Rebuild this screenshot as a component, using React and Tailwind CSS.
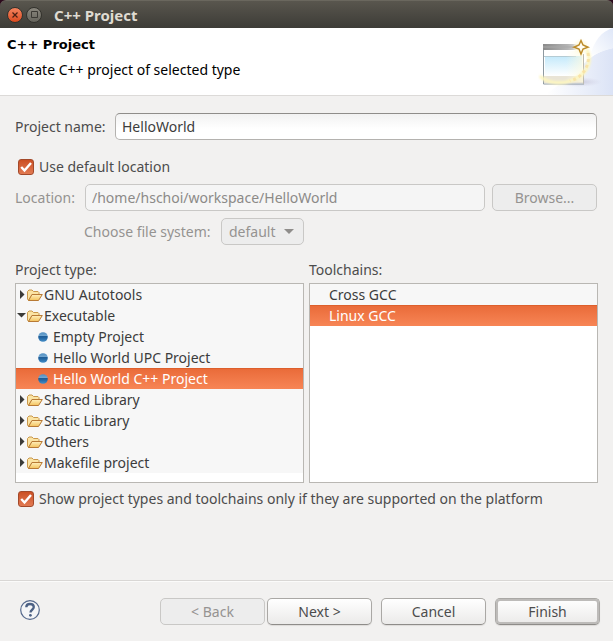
import React, { useState } from "react";

const projectTypes = [
  { name: "GNU Autotools" },
  {
    name: "Executable",
    children: ["Empty Project", "Hello World UPC Project", "Hello World C++ Project"],
  },
  { name: "Shared Library" },
  { name: "Static Library" },
  { name: "Others" },
  { name: "Makefile project" },
];

const toolchains = ["Cross GCC", "Linux GCC"];

const selectedRow =
  "bg-linear-to-b from-[#e96a38] to-[#f78555] text-white shadow-[inset_0_1px_0_#dd5f2c]";

function FolderIcon() {
  return (
    <svg className="h-4 w-4 shrink-0" viewBox="0 0 16 16" aria-hidden="true">
      <defs>
        <linearGradient id="folder" x1="0" y1="0" x2="0" y2="1">
          <stop offset="0" stopColor="#fff0bd" />
          <stop offset="1" stopColor="#f3c25c" />
        </linearGradient>
      </defs>
      <path
        d="M.5 12V4.500l1.500-1.500h3l1.500 1.500h4.500l1 1v2H5L1.500 13.500z"
        fill="#fbe4a4"
        stroke="#c9974a"
        strokeLinejoin="round"
      />
      <path
        d="M1.500 13.500 5 7.500h10.300l-3.800 6z"
        fill="url(#folder)"
        stroke="#b87a35"
        strokeLinejoin="round"
      />
    </svg>
  );
}

function DotIcon() {
  return (
    <svg className="h-[10px] w-[10px] shrink-0" viewBox="0 0 10 10" aria-hidden="true">
      <defs>
        <linearGradient id="dot" x1="0" y1="0" x2="0" y2="1">
          <stop offset="0" stopColor="#4f8dc0" />
          <stop offset=".35" stopColor="#6fa5d0" />
          <stop offset=".45" stopColor="#1d5c96" />
          <stop offset=".6" stopColor="#2467a3" />
          <stop offset="1" stopColor="#468fc8" />
        </linearGradient>
      </defs>
      <circle cx="5" cy="5" r="4.800" fill="url(#dot)" />
    </svg>
  );
}

function Expander({ open }) {
  return (
    <svg className="h-[9px] w-[9px] shrink-0" viewBox="0 0 9 9" aria-hidden="true">
      <path d={open ? "M0 2h9L4.500 6.500z" : "M3 0v9L7.500 4.500z"} fill="#3a3a38" />
    </svg>
  );
}

function WizardBanner() {
  return (
    <svg className="h-[67px] w-[75px] shrink-0" viewBox="0 0 75 67" aria-hidden="true">
      <defs>
        <linearGradient id="sweep" x1="0" y1="0" x2="1" y2="0">
          <stop offset="0" stopColor="#fff" />
          <stop offset="1" stopColor="#dbe3f6" />
        </linearGradient>
        <linearGradient id="arc" x1="0" y1="1" x2="1" y2="0">
          <stop offset="0" stopColor="#fff" />
          <stop offset="1" stopColor="#dfe7f8" />
        </linearGradient>
        <linearGradient id="bar" x1="0" y1="0" x2="1" y2="0">
          <stop offset="0" stopColor="#8a8a8a" />
          <stop offset=".6" stopColor="#b4b4b4" />
          <stop offset="1" stopColor="#f2f0e8" />
        </linearGradient>
        <linearGradient id="pane" x1="0" y1="0" x2="0" y2="1">
          <stop offset="0" stopColor="#c3e9fb" />
          <stop offset="1" stopColor="#fff" />
        </linearGradient>
        <linearGradient id="fade" x1="0" y1="0" x2="1" y2="0">
          <stop offset="0" stopColor="#fffbe0" stopOpacity="0" />
          <stop offset="1" stopColor="#fffbe0" />
        </linearGradient>
        <radialGradient id="shadow">
          <stop offset="0" stopColor="#a9a5c0" stopOpacity=".6" />
          <stop offset="1" stopColor="#c9c6dc" stopOpacity="0" />
        </radialGradient>
        <filter id="soft" x="-30%" y="-30%" width="160%" height="160%">
          <feGaussianBlur stdDeviation="1.300" />
        </filter>
      </defs>
      <path d="M75 20C50 24 45 42 9 65v2h66z" fill="url(#sweep)" />
      <path d="M75 0C64 3 56 12 52 29c7-4 15-7 23-9z" fill="url(#arc)" />
      <ellipse cx="40" cy="54" rx="24" ry="5" fill="url(#shadow)" />
      <rect x="5" y="16" width="41" height="40" fill="#fff" />
      <rect x="5" y="16" width="41" height="6" fill="url(#bar)" />
      <path d="M5 19h33" stroke="#a9a9a9" />
      <rect x="6" y="48" width="39" height="7" fill="#e9e4d6" />
      <rect x="7" y="28" width="37" height="20" fill="url(#pane)" />
      <path d="M6 28.500h32" stroke="#b4cbd4" />
      <path d="M5.500 22v34H46" fill="none" stroke="#8e99a0" />
      <path d="M45.500 26v30" stroke="#bdbbb0" />
      <rect x="28" y="23" width="17" height="31" fill="url(#fade)" opacity=".7" />
      <path
        d="M49 22C55 36 47 47 35 52S10 55 3 49"
        fill="none"
        stroke="#fdf6c0"
        strokeWidth="3.500"
        strokeLinecap="round"
        filter="url(#soft)"
      />
      <path
        d="M50 25c2 10-3 20-11 25-3 2-5 2-7 3"
        fill="none"
        stroke="#f7dfa0"
        strokeWidth="3"
        strokeDasharray="3 3"
        opacity=".8"
      />
      <circle cx="43" cy="19" r="7" fill="#fffbe2" opacity=".8" filter="url(#soft)" />
      <path
        d="M43 12.500 45 17l5 2.200L45 21l-2 5-2-5-5-1.800L41 17z"
        fill="#fffdf3"
        stroke="#bd8c2a"
        strokeWidth="1.500"
      />
    </svg>
  );
}

function Check({ id, label, checked, onChange }) {
  return (
    <div className="ml-[3px] flex h-5 items-center gap-[5px]">
      <span className="grid h-4 w-4 shrink-0">
        <input
          id={id}
          type="checkbox"
          checked={checked}
          onChange={(e) => onChange(e.target.checked)}
          className="peer col-start-1 row-start-1 h-4 w-4 appearance-none rounded-[3px] border border-[#a09c98] bg-white checked:border-[#a3492a] checked:bg-linear-to-b checked:from-[#cb4f22] checked:to-[#e27a52]"
        />
        <svg
          className="pointer-events-none invisible col-start-1 row-start-1 h-4 w-4 peer-checked:visible"
          viewBox="0 0 16 16"
          aria-hidden="true"
        >
          <path d="M3.200 8 6.500 11.500 13 4" fill="none" stroke="#fff" strokeWidth="2.400" />
        </svg>
      </span>
      <label htmlFor={id} className="whitespace-nowrap">{label}</label>
    </div>
  );
}

const button =
  "h-[27px] w-[105px] shrink-0 rounded-[5px] border text-center leading-[20px]";
const enabled =
  "border-[#aaa8a5] border-b-[#8e8c89] bg-linear-to-b from-white to-[#ebeae9] text-[#4c4c4c] shadow-[0_1px_1px_#dddbd9]";
const disabled = "border-[#c9c8c6] bg-[#ededed] text-[#959391]";

export default function App() {
  const [name, setName] = useState("HelloWorld");
  const [useDefault, setUseDefault] = useState(true);
  const [supportedOnly, setSupportedOnly] = useState(true);
  const [type, setType] = useState("Hello World C++ Project");
  const [chain, setChain] = useState("Linux GCC");

  return (
    <div className="flex min-h-screen flex-col bg-[#f2f1f0] font-['Noto_Sans',sans-serif] text-[14px] leading-5 text-[#4c4c4c]">
      <div className="bg-[#2c0a1c]">
        <div className="flex h-7 items-center gap-[3px] rounded-t-[6px] border-t border-[#6a675e] bg-linear-to-b from-[#59564e] to-[#3d3c37] px-[7px]">
          <button
            aria-label="Close"
            className="grid h-4 w-4 place-items-center rounded-full border border-[#33322d] bg-linear-to-b from-[#f4845e] to-[#dc4a1c]"
          >
            <svg className="h-[6px] w-[6px]" viewBox="0 0 6 6" aria-hidden="true">
              <path d="m.5.5 5 5m0-5-5 5" stroke="#4a2013" strokeWidth="1.200" />
            </svg>
          </button>
          <button
            aria-label="Maximize"
            className="grid h-4 w-4 place-items-center rounded-full border border-[#33322d] bg-linear-to-b from-[#8a877e] to-[#66645c]"
          >
            <svg className="h-[7px] w-[7px]" viewBox="0 0 7 7" aria-hidden="true">
              <path d="M.5.5h6v6h-6z" fill="none" stroke="#3b3934" />
            </svg>
          </button>
          <span className="ml-[9px] text-[15px] font-bold text-[#dfdbd2]">C++ Project</span>
        </div>
      </div>

      <header className="flex h-[68px] justify-between border-b border-[#dcdad8] bg-white text-black">
        <div className="pt-[7px] pl-[7px]">
          <h1 className="font-['DejaVu_Sans',sans-serif] text-[13px] font-bold">C++ Project</h1>
          <p className="mt-[5px] pl-[5px]">Create C++ project of selected type</p>
        </div>
        <WizardBanner />
      </header>

      <main className="flex-1 px-[15px] pt-[17px]">
        <div className="flex items-center gap-[6px]">
          <label htmlFor="name" className="w-[94px] whitespace-nowrap">Project name:</label>
          <input
            id="name"
            value={name}
            onChange={(e) => setName(e.target.value)}
            className="mr-px h-[27px] min-w-0 flex-1 rounded-[5px] border border-[#b4b2af] border-t-[#8f8d8a] bg-linear-to-b from-[#f2f2f2] to-white to-60% px-[6px] text-[#3c3c3c] outline-none"
          />
        </div>

        <div className="mt-[17px]">
          <Check id="use-default" label="Use default location" checked={useDefault} onChange={setUseDefault} />
        </div>

        <div className="mt-[7px] flex items-center gap-[7px] pr-px text-[#959391]">
          <label htmlFor="location" className="w-[63px] whitespace-nowrap">Location:</label>
          <input
            id="location"
            disabled
            value="/home/hschoi/workspace/HelloWorld"
            readOnly
            className="h-[27px] min-w-0 flex-1 rounded-[5px] border border-[#c9c8c6] bg-[#f5f5f5] px-[6px] text-[#8c8a88]"
          />
          <button disabled className={`${button} ${disabled}`}>Browse...</button>
        </div>

        <div className="mt-[7px] ml-[69px] flex items-center gap-[6px] text-[#959391]">
          <label htmlFor="fs" className="w-[131px] whitespace-nowrap">Choose file system:</label>
          <div className="grid items-center">
            <select
              id="fs"
              disabled
              className="col-start-1 row-start-1 h-[27px] w-[83px] appearance-none rounded-[5px] border border-[#c9c8c6] bg-[#ededed] pl-[7px] opacity-100"
            >
              <option>default</option>
            </select>
            <svg
              className="pointer-events-none col-start-1 row-start-1 mr-[10px] h-[5px] w-[10px] justify-self-end"
              viewBox="0 0 10 5"
              aria-hidden="true"
            >
              <path d="M0 0h10L5 5z" fill="#8f8d8b" />
            </svg>
          </div>
        </div>

        <div className="mt-[15px] grid grid-cols-2 gap-[5px]">
          <section>
            <h2 id="types">Project type:</h2>
            <ul
              role="tree"
              aria-labelledby="types"
              className="mt-[3px] h-[200px] overflow-hidden border border-[#b9b7b3] bg-white leading-[21px] text-[#3c3c3c]"
            >
              {projectTypes.map((group) => (
                <li key={group.name} role="treeitem" aria-expanded={Boolean(group.children)}>
                  <div className="flex h-[21px] items-center gap-px bg-[#f7f7f7] pl-px">
                    <Expander open={Boolean(group.children)} />
                    <FolderIcon />
                    <span>{group.name}</span>
                  </div>
                  {group.children && (
                    <ul role="group">
                      {group.children.map((child) => (
                        <li
                          key={child}
                          role="treeitem"
                          aria-selected={child === type}
                          onClick={() => setType(child)}
                          className={`flex h-[21px] items-center gap-[5px] pl-[22px] ${
                            child === type ? selectedRow : "bg-[#f7f7f7]"
                          }`}
                        >
                          <DotIcon />
                          <span>{child}</span>
                        </li>
                      ))}
                    </ul>
                  )}
                </li>
              ))}
            </ul>
          </section>
          <section>
            <h2 id="chains">Toolchains:</h2>
            <ul
              role="listbox"
              aria-labelledby="chains"
              className="mt-[3px] h-[200px] overflow-hidden border border-[#b9b7b3] bg-white leading-[21px] text-[#3c3c3c]"
            >
              {toolchains.map((item) => (
                <li
                  key={item}
                  role="option"
                  aria-selected={item === chain}
                  onClick={() => setChain(item)}
                  className={`flex h-[21px] items-center pl-[19px] ${
                    item === chain ? selectedRow : "bg-[#f7f7f7]"
                  }`}
                >
                  {item}
                </li>
              ))}
            </ul>
          </section>
        </div>

        <div className="mt-[6px]">
          <Check
            id="supported"
            label="Show project types and toolchains only if they are supported on the platform"
            checked={supportedOnly}
            onChange={setSupportedOnly}
          />
        </div>
      </main>

      <footer className="flex items-center border-t border-[#d9d7d5] pt-[17px] pr-[13px] pb-4 pl-5 shadow-[inset_0_1px_0_#fbfbfa]">
        <button aria-label="Help" className="mr-auto -mt-1">
          <svg className="h-5 w-5" viewBox="0 0 20 20" aria-hidden="true">
            <circle cx="10" cy="10" r="9.300" fill="#f4f5f7" stroke="#54688c" strokeWidth="1.200" />
            <path
              d="M6.300 7.300C6.300 4.900 7.900 4 10 4s3.800 1.100 3.800 3.100c0 2.700-3.300 2.600-3.300 5.400"
              fill="none"
              stroke="#4c6185"
              strokeWidth="2.300"
            />
            <circle cx="10.400" cy="15.300" r="1.400" fill="#4c6185" />
          </svg>
        </button>
        <div className="flex gap-[9px]">
          <div className="flex gap-[2px]">
            <button disabled className={`${button} ${disabled}`}>&lt; Back</button>
            <button className={`${button} ${enabled}`}>Next &gt;</button>
          </div>
          <button className={`${button} ${enabled}`}>Cancel</button>
          <button className={`${button} ${enabled} ring-2 ring-[#bdbbb9] ring-inset`}>Finish</button>
        </div>
      </footer>
    </div>
  );
}
